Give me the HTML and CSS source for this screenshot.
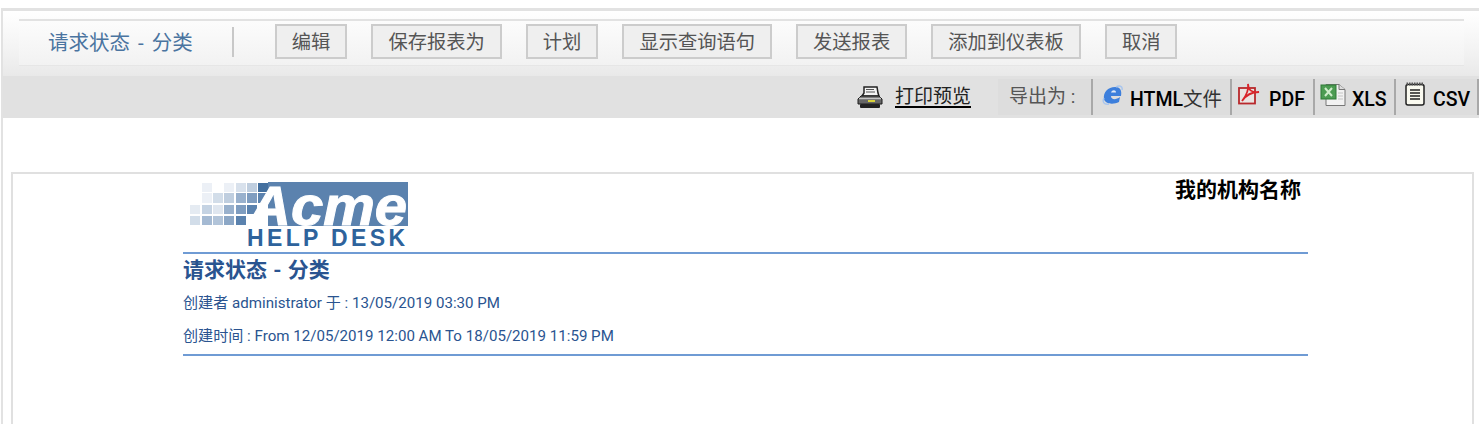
FILE: index.html
```html
<!DOCTYPE html>
<html lang="zh">
<head>
    <meta charset="UTF-8">
    <title>请求状态 - 分类</title>
    <link rel="stylesheet" href="styles.css">
</head>
<body>
    <div class="frame">
        <div class="toolbar">
            <div class="toolbar-inner">
                <span class="report-name">请求状态 - 分类</span>
                <span class="divider"></span>
                <a class="btn">编辑</a>
                <a class="btn">保存报表为</a>
                <a class="btn">计划</a>
                <a class="btn">显示查询语句</a>
                <a class="btn">发送报表</a>
                <a class="btn">添加到仪表板</a>
                <a class="btn">取消</a>
            </div>
        </div>
        <div class="exportbar">
            <svg class="printer" width="26" height="23" viewBox="0 0 26 23">
                <path d="M7 1h13l1 6 1 3H5l2-3z" fill="#f4f4f4" stroke="#222" stroke-width="1.500"/>
                <path d="M9 3.500h8M9 6h9" stroke="#555"/>
                <path d="M4 10h18l3 3v5H1v-5z" fill="#666" stroke="#1c1c1c"/>
                <path d="M2 12.500h22" stroke="#c4c4c4" stroke-width="1.500"/>
                <rect x="11" y="14" width="7" height="2" fill="#d9d23a"/>
                <rect x="3" y="18" width="20" height="4" rx="1" fill="#222"/>
            </svg>
            <a class="print-link">打印预览</a>
            <div class="export-group">
                <span class="export-label">导出为 :</span>
                <a class="export-item item-html">
                    <svg width="22" height="22" viewBox="0 0 22 22">
                        <path d="M2 14C1 7 6 2 13 2c5 0 7 3 6 9H9c0 4 5 4 9 1l-1 5c-6 3-14 2-15-3z" fill="#3d7fdc"/>
                        <path d="M9 7.500h5c0-3-4-3-5 0z" fill="#dfeaf8"/>
                        <path d="M14 2c3-2 7-1 6 3M2 13c-2 4 0 7 5 6" fill="none" stroke="#a9c6ee" stroke-width="1.500"/>
                    </svg>
                    <span>HTML<span class="thin">文件</span></span>
                </a>
                <a class="export-item item-pdf">
                    <svg width="24" height="22" viewBox="0 0 24 22">
                        <rect x="2" y="5" width="16" height="15.500" fill="#e9e4e2" stroke="#b8282c" stroke-width="1.800"/>
                        <path d="M11 1c0 6 4 9 11 8-7 0-13 3-17 9 4-5 7-11 6-17z" fill="none" stroke="#d8242a" stroke-width="1.800"/>
                    </svg>
                    <span>PDF</span>
                </a>
                <a class="export-item item-xls">
                    <svg width="26" height="22" viewBox="0 0 26 22">
                        <path d="M6 .500h13l6 5v16H6z" fill="#f2f2f2" stroke="#777"/>
                        <path d="M19 .500v5h6" fill="#ddd" stroke="#777"/>
                        <path d="M18 9h5M18 12h5M18 15h5" stroke="#c4c4c4"/>
                        <rect x="1" y="1" width="15" height="14" fill="#4c9c52" stroke="#2f7a36"/>
                        <path d="M5 4l7 8M12 4l-7 8" stroke="#cfeccb" stroke-width="2"/>
                    </svg>
                    <span>XLS</span>
                </a>
                <a class="export-item item-csv">
                    <svg width="22" height="24" viewBox="0 0 22 24">
                        <rect x="2" y="2.500" width="18" height="20.500" rx="2" fill="#fafaf0" stroke="#222" stroke-width="1.500"/>
                        <path d="M2.500 2h17" stroke="#555" stroke-width="3" stroke-dasharray="1.500 1"/>
                        <path d="M6 8h10M6 11h10M6 14h10M6 17h10" stroke="#222" stroke-width="1.600"/>
                    </svg>
                    <span>CSV</span>
                </a>
            </div>
        </div>
        <div class="report">
            <div class="report-head">
                <div class="brand">
                    <svg class="logo" width="228" height="78" viewBox="0 -6 228 78">
                        <rect x="85" y="2" width="140" height="44" fill="#5b82ae"/>
                        <g fill="#7f9dc0">
                            <rect x="19" y="3" width="10" height="9" opacity=".15"/>
                            <rect x="41" y="3" width="10" height="9" opacity=".15"/>
                            <rect x="53" y="3" width="10" height="9" opacity=".3"/>
                            <rect x="64" y="3" width="10" height="9" opacity=".5"/>
                            <rect x="75" y="3" width="10" height="9" fill="#44709f"/>
                            <rect x="19" y="13" width="10" height="10" opacity=".15"/>
                            <rect x="30" y="13" width="10" height="10" opacity=".35"/>
                            <rect x="41" y="13" width="10" height="10" opacity=".5"/>
                            <rect x="53" y="13" width="10" height="10" opacity=".8"/>
                            <rect x="64" y="13" width="10" height="10"/>
                            <rect x="75" y="13" width="10" height="10" fill="#5b82ae"/>
                            <rect x="7" y="25" width="10" height="9" opacity=".2"/>
                            <rect x="19" y="25" width="10" height="9" opacity=".45"/>
                            <rect x="30" y="25" width="10" height="9" opacity=".25"/>
                            <rect x="41" y="25" width="10" height="9" opacity=".8"/>
                            <rect x="53" y="25" width="10" height="9"/>
                            <rect x="64" y="25" width="10" height="9" fill="#5b82ae"/>
                            <rect x="7" y="36" width="10" height="9" opacity=".35"/>
                            <rect x="19" y="36" width="10" height="9" opacity=".7"/>
                            <rect x="30" y="36" width="10" height="9" opacity=".6"/>
                            <rect x="41" y="36" width="10" height="9" opacity=".9"/>
                            <rect x="53" y="36" width="10" height="9" fill="#5b82ae"/>
                        </g>
                        <text class="logo-acme" x="66" y="45" textLength="158" lengthAdjust="spacingAndGlyphs">Acme</text>
                        <text class="logo-help" x="64" y="66" textLength="158">HELP DESK</text>
                    </svg>
                    <div class="org">我的机构名称</div>
                </div>
                <h1 class="report-title">请求状态 - 分类</h1>
                <p class="meta meta-by">创建者 administrator 于 : 13/05/2019 03:30 PM</p>
                <p class="meta meta-range">创建时间 : From 12/05/2019 12:00 AM To 18/05/2019 11:59 PM</p>
            </div>
        </div>
    </div>
</body>
</html>
```

FILE: styles.css
```css
* {
    box-sizing: border-box;
}
html, body {
    margin: 0;
    height: 100%;
    overflow: hidden;
    background: #fff;
}
body {
    padding: 8px 0 0 1px;
    font-family: Roboto, "Noto Sans CJK SC", sans-serif;
}
.frame {
    border-top: 3px solid #e2e2e2;
    border-left: 2px solid #e2e2e2;
    height: 100%;
}
.toolbar {
    height: 65px;
    padding: 8px 15px 0 16px;
    background: linear-gradient(#fff 0%, #f4f4f4 55%, #e9e9e9 100%);
}
.toolbar-inner {
    height: 47px;
    padding-bottom: 3px;
    display: flex;
    align-items: center;
    border-top: 2px solid #e2e2e2;
    border-bottom: 1px solid #e6e6e6;
    background: linear-gradient(#fcfcfc, #f2f2f2);
}
.report-name {
    margin: 0 0 2px 29px;
    font-size: 20.500px;
    word-spacing: 3px;
    color: #4a74a0;
}
.divider {
    width: 2px;
    height: 30px;
    margin: 0 41px 0 39px;
    background: #c8c8c8;
}
.btn {
    height: 35px;
    line-height: 33px;
    padding: 0 15px;
    margin-right: 24px;
    font-size: 19.300px;
    color: #555;
    background: #efefef;
    border: 2px solid #cccccc;
}
.exportbar {
    height: 42px;
    display: flex;
    justify-content: flex-end;
    align-items: flex-start;
    background: #e1e1e1;
}
.printer {
    margin: 10px 12px 0 0;
}
.print-link {
    height: 26px;
    margin: 6px 27px 0 0;
    font-size: 19px;
    line-height: 29px;
    color: #222;
    border-bottom: 2px solid #000;
}
.export-group {
    display: flex;
    height: 36px;
    margin-top: 3px;
    background: #dddddd;
}
.export-label {
    width: 93px;
    padding-left: 11px;
    font-size: 19px;
    line-height: 36px;
    white-space: nowrap;
    color: #555;
}
.export-item {
    display: flex;
    align-items: flex-start;
    height: 36px;
    border-left: 2px solid #a8a8a8;
    font-size: 19.500px;
    font-weight: 500;
    color: #000;
}
.export-item span {
    line-height: 41px;
}
.export-item .thin {
    font-weight: 400;
    color: #333;
}
.item-html {
    width: 139px;
    padding-left: 9px;
}
.item-html svg {
    margin: 6px 6px 0 0;
}
.item-pdf {
    width: 83px;
    padding-left: 5px;
}
.item-pdf svg {
    margin: 4px 8px 0 0;
}
.item-xls {
    width: 81px;
    padding-left: 5px;
}
.item-xls svg {
    margin: 5px 6px 0 0;
}
.item-csv {
    width: 85px;
    padding-left: 8px;
    border-right: 2px solid #a8a8a8;
}
.item-csv svg {
    margin: 3px 7px 0 0;
}
.report {
    margin: 54px 5px 0 8px;
    height: 252px;
    border: 2px solid #e0e0e0;
    border-bottom: 0;
}
.report-head {
    width: 1125px;
    margin-left: 170px;
}
.brand {
    display: flex;
    justify-content: space-between;
    height: 80px;
    border-bottom: 2px solid #6f9bd4;
}
.logo {
    display: block;
}
.logo-acme {
    font-family: "Liberation Sans", sans-serif;
    font-size: 55px;
    font-weight: 700;
    font-style: italic;
    fill: #fff;
    stroke: #fff;
    stroke-width: 1px;
}
.logo-help {
    font-family: "Liberation Sans", sans-serif;
    font-size: 23px;
    font-weight: 700;
    fill: #2e639c;
}
.org {
    margin: 3px 7px 0 0;
    font-size: 21px;
    line-height: 26px;
    font-weight: 700;
    color: #000;
}
.report-title {
    margin: 3px 0 0;
    font-size: 21px;
    word-spacing: 1px;
    line-height: 26px;
    font-weight: 700;
    color: #2a5490;
}
.meta {
    margin: 0;
    font-size: 15.100px;
    line-height: 20px;
    color: #2a5490;
}
.meta-by {
    margin-top: 10px;
}
.meta-range {
    margin-top: 13px;
    padding-bottom: 8px;
    border-bottom: 2px solid #6f9bd4;
}
```
